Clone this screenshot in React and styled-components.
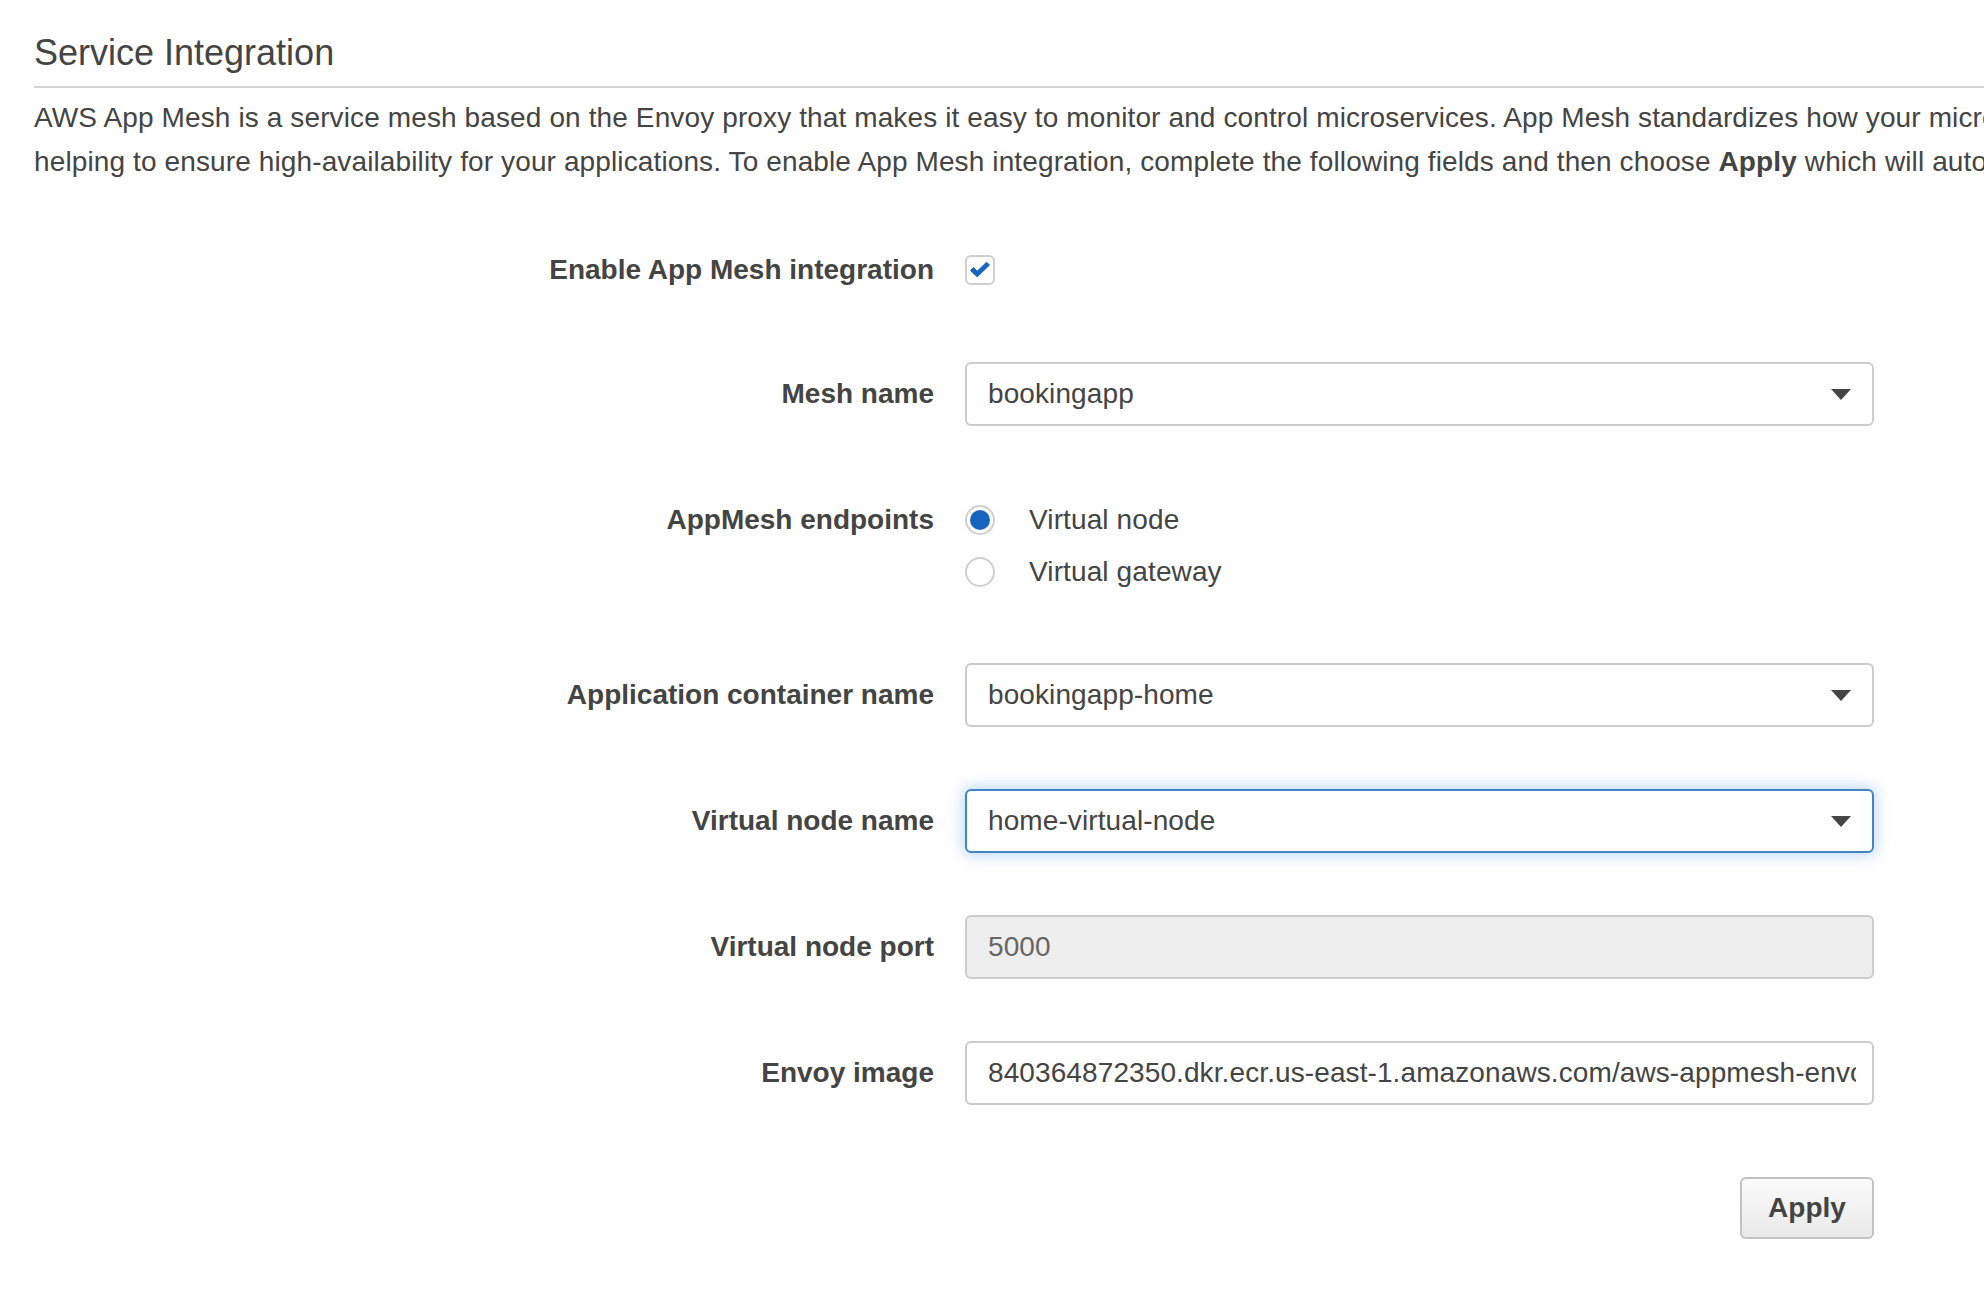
import React from "react";
import styled, { createGlobalStyle, css } from "styled-components";

const GlobalStyle = createGlobalStyle`
  html, body {
    margin: 0;
    padding: 0;
    background: #fff;
    overflow: hidden;
  }
  body {
    font-family: "Liberation Sans", Arial, Helvetica, sans-serif;
    color: #444;
  }
`;

const Page = styled.div`
  width: 2600px;
  padding: 31px 0 0 34px;
  box-sizing: border-box;
`;

const Title = styled.h2`
  margin: 0;
  font-size: 36px;
  line-height: 44px;
  font-weight: 400;
  color: #444;
  padding-bottom: 11px;
  border-bottom: 2px solid #d5d5d5;
`;

const Intro = styled.p`
  margin: 8px 0 0;
  font-size: 28px;
  line-height: 44px;
  letter-spacing: 0.12px;
  white-space: nowrap;
  color: #444;

  b {
    font-weight: 700;
  }
`;

const Form = styled.div`
  margin-top: 56px;
  display: flex;
  flex-direction: column;
  gap: 62px;
`;

const Row = styled.div`
  display: grid;
  grid-template-columns: 900px 909px;
  column-gap: 31px;
  align-items: ${(p) => (p.$top ? "start" : "center")};
  min-height: ${(p) => p.$height || 64}px;
`;

const Label = styled.div`
  text-align: right;
  font-size: 28px;
  font-weight: 700;
  color: #444;
  line-height: 32px;
  ${(p) =>
    p.$top &&
    css`
      line-height: 52px;
      padding-top: 6px;
    `}
`;

const CheckBox = styled.span`
  width: 30px;
  height: 30px;
  box-sizing: border-box;
  border: 2px solid #cfcfcf;
  border-radius: 6px;
  display: inline-flex;
  align-items: center;
  justify-content: center;
  background: #fff;
  vertical-align: middle;
`;

const RadioGroup = styled.div`
  display: flex;
  flex-direction: column;
  padding: 6px 0 3px;
`;

const RadioItem = styled.label`
  display: flex;
  align-items: center;
  height: 52px;
  gap: 34px;
  font-size: 28px;
  letter-spacing: 0.12px;
  color: #444;
`;

const RadioDot = styled.span`
  width: 30px;
  height: 30px;
  box-sizing: border-box;
  border-radius: 50%;
  border: 2px solid #cfcfcf;
  background: #fff;
  display: flex;
  align-items: center;
  justify-content: center;

  &::after {
    content: "";
    width: 20px;
    height: 20px;
    border-radius: 50%;
    background: ${(p) => (p.$checked ? "#1664bd" : "transparent")};
  }
`;

const Field = styled.div`
  height: 64px;
  box-sizing: border-box;
  border: 2px solid ${(p) => (p.$focused ? "#3f85c8" : "#cccccc")};
  border-radius: 6px;
  background: ${(p) => (p.$disabled ? "#eeeeee" : "#fff")};
  color: ${(p) => (p.$disabled ? "#666" : "#444")};
  box-shadow: ${(p) =>
    p.$focused ? "0 0 14px 3px rgba(60, 140, 230, 0.3)" : "none"};
  display: flex;
  align-items: center;
  padding: 0 16px 0 21px;
  font-size: 28px;
  letter-spacing: 0.1px;
  overflow: hidden;
`;

const FieldText = styled.span`
  flex: 1;
  white-space: nowrap;
  overflow: hidden;
`;

const Caret = styled.svg`
  flex: none;
  width: 20px;
  height: 11px;
  margin-right: 5px;
`;

const Actions = styled.div`
  display: grid;
  grid-template-columns: 1840px;
  justify-items: end;
  margin-top: 72px;
`;

const Button = styled.button`
  height: 62px;
  width: 134px;
  box-sizing: border-box;
  border: 2px solid #c2c2c2;
  border-radius: 6px;
  background: linear-gradient(#fbfbfb, #e9e9e9);
  font-family: "Liberation Sans", Arial, sans-serif;
  font-size: 28px;
  font-weight: 700;
  color: #444;
  cursor: pointer;
`;

const Select = ({ value, focused }) => (
  <Field $focused={focused}>
    <FieldText>{value}</FieldText>
    <Caret viewBox="0 0 20 11">
      <path d="M0 0 H20 L10 11 Z" fill="#444" />
    </Caret>
  </Field>
);

const App = () => (
  <>
    <GlobalStyle />
    <Page>
      <Title>Service Integration</Title>
      <Intro>
        AWS App Mesh is a service mesh based on the Envoy proxy that makes it easy to monitor and control microservices. App Mesh standardizes how your microservices communicate, giving you end-to-end visibility and
        <br />
        helping to ensure high-availability for your applications. To enable App Mesh integration, complete the following fields and then choose <b>Apply</b> which will automatically configure the proxy container.
      </Intro>

      <Form>
        <Row $height={60}>
          <Label>Enable App Mesh integration</Label>
          <div>
            <CheckBox>
              <svg width="22" height="18" viewBox="0 0 22 18">
                <path
                  d="M1.5 9.5 L4.5 6.6 L8.2 10.2 L17.6 1.2 L20.5 4.1 L8.2 15.8 Z"
                  fill="#1664bd"
                  stroke="#1664bd"
                  strokeWidth="1"
                  strokeLinejoin="round"
                />
              </svg>
            </CheckBox>
          </div>
        </Row>

        <Row>
          <Label>Mesh name</Label>
          <Select value="bookingapp" />
        </Row>

        <Row $top>
          <Label $top>AppMesh endpoints</Label>
          <RadioGroup>
            <RadioItem>
              <RadioDot $checked />
              Virtual node
            </RadioItem>
            <RadioItem>
              <RadioDot />
              Virtual gateway
            </RadioItem>
          </RadioGroup>
        </Row>

        <Row>
          <Label>Application container name</Label>
          <Select value="bookingapp-home" />
        </Row>

        <Row>
          <Label>Virtual node name</Label>
          <Select value="home-virtual-node" focused />
        </Row>

        <Row>
          <Label>Virtual node port</Label>
          <Field $disabled>
            <FieldText>5000</FieldText>
          </Field>
        </Row>

        <Row>
          <Label>Envoy image</Label>
          <Field>
            <FieldText>840364872350.dkr.ecr.us-east-1.amazonaws.com/aws-appmesh-envoy:v1.15.1.0-prod</FieldText>
          </Field>
        </Row>
      </Form>

      <Actions>
        <Button>Apply</Button>
      </Actions>
    </Page>
  </>
);

export default App;
